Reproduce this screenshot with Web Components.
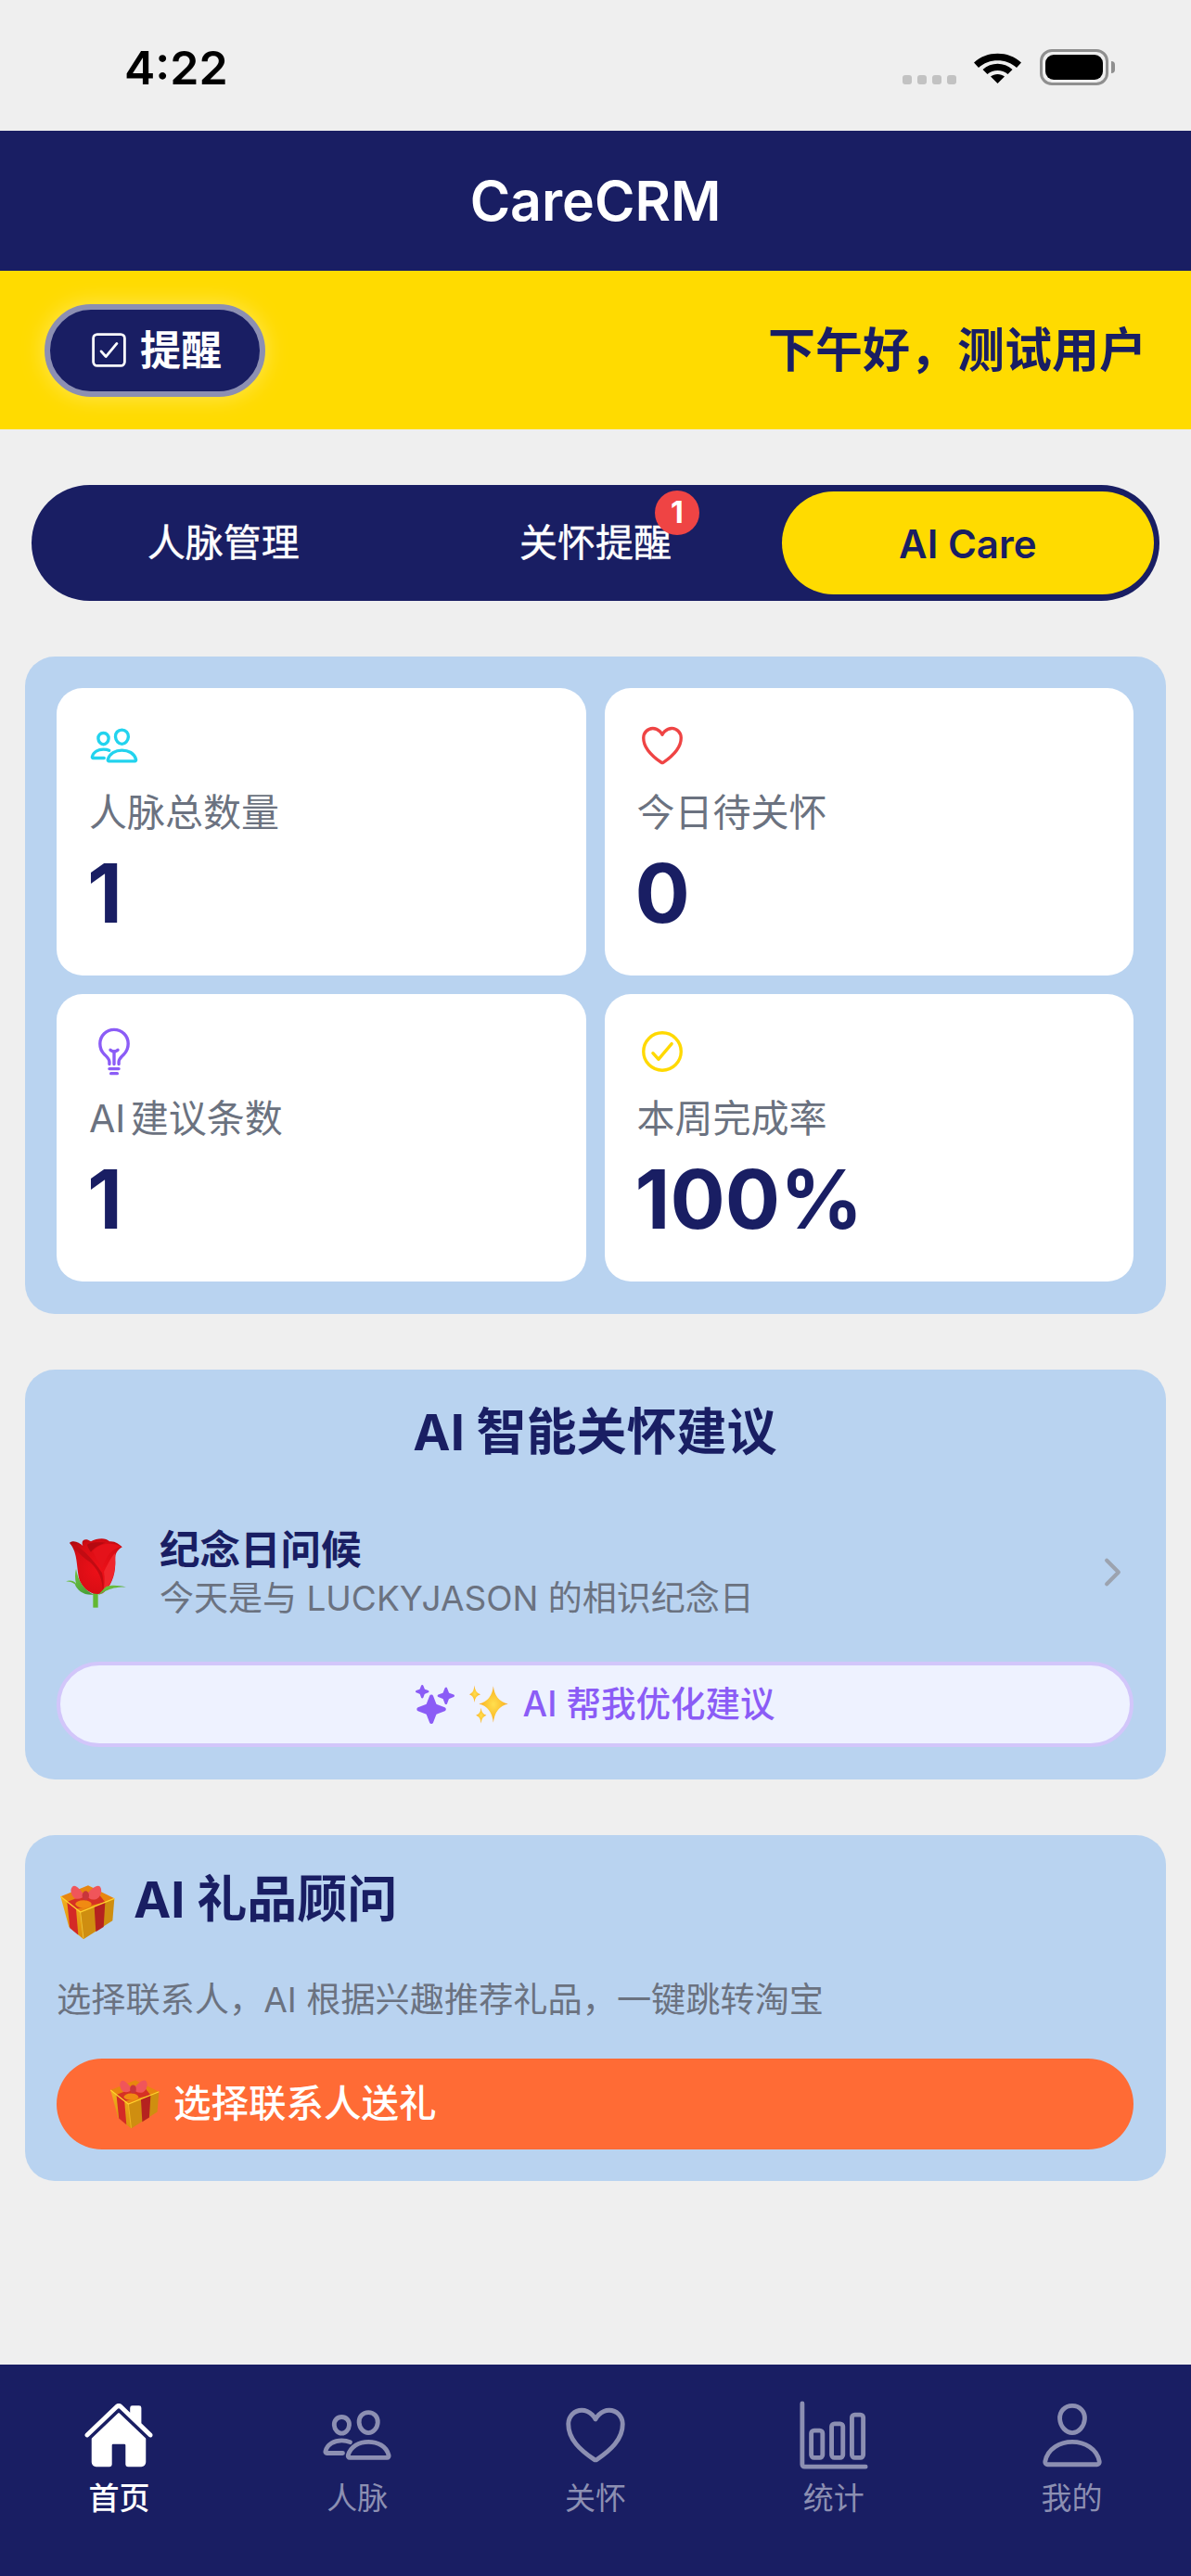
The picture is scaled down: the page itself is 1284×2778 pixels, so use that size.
<!DOCTYPE html>
<html lang="zh-CN">
<head>
<meta charset="utf-8">
<title>CareCRM</title>
<style>
  html, body { margin: 0; padding: 0; background: #efefef; }
  body { width: 1284px; height: 2778px; overflow: hidden; font-family: Inter, "Noto Sans CJK SC", sans-serif; }
</style>
</head>
<body>
<care-app>
  <status-bar slot="top" time="4:22"></status-bar>
  <app-header slot="top">CareCRM</app-header>
  <greeting-bar slot="top" label="提醒">下午好，测试用户</greeting-bar>

  <tab-switch active="2" badge-on="1" badge="1" tabs="人脉管理|关怀提醒|AI Care"></tab-switch>

  <stats-panel>
    <stat-card icon="people" color="#22d3ee" label="人脉总数量" value="1"></stat-card>
    <stat-card icon="heart" color="#ef4444" label="今日待关怀" value="0"></stat-card>
    <stat-card icon="bulb" color="#8b5cf6" label="AI 建议条数" value="1"></stat-card>
    <stat-card icon="check" color="#ffd900" label="本周完成率" value="100%"></stat-card>
  </stats-panel>

  <suggest-panel heading="AI 智能关怀建议" item-title="纪念日问候" item-text="今天是与 LUCKYJASON 的相识纪念日" action="AI 帮我优化建议"></suggest-panel>

  <gift-panel heading="AI 礼品顾问" text="选择联系人，AI 根据兴趣推荐礼品，一键跳转淘宝" action="选择联系人送礼"></gift-panel>

  <bottom-nav slot="bottom">
    <nav-item icon="home" label="首页" active></nav-item>
    <nav-item icon="people" label="人脉"></nav-item>
    <nav-item icon="heart" label="关怀"></nav-item>
    <nav-item icon="chart" label="统计"></nav-item>
    <nav-item icon="person" label="我的"></nav-item>
  </bottom-nav>
</care-app>

<script>
const NAVY = "#191e63";

// ionicons style outlines, all on a 512 box
const line = 'fill="none" stroke="currentColor" stroke-width="32" stroke-linecap="round" stroke-linejoin="round"';
const GLYPHS = {
  home: `<path fill="currentColor" d="M261.56 101.28a8 8 0 00-11.06 0L66.4 277.15a8 8 0 00-2.47 5.79L63.9 448a32 32 0 0032 32H192a16 16 0 0016-16V328a8 8 0 018-8h80a8 8 0 018 8v136a16 16 0 0016 16h96.06a32 32 0 0032-32V282.94a8 8 0 00-2.47-5.79z"/><path fill="currentColor" d="M490.91 244.15l-74.8-71.56V64a16 16 0 00-16-16h-48a16 16 0 00-16 16v32l-57.92-55.38C272.77 35.14 264.71 32 256 32c-8.68 0-16.72 3.14-22.14 8.63l-212.7 203.5c-6.22 6-7 15.87-1.34 22.37A16 16 0 0043 267.56L250.5 69.28a8 8 0 0111.06 0l207.52 198.28a16 16 0 0022.59-.44c6.14-6.36 5.63-16.86-.76-22.97z"/>`,
  people: `<path ${line} d="M402 168c-2.93 40.67-33.1 72-66 72s-63.12-31.32-66-72c-3-42.31 26.37-72 66-72s69 30.46 66 72z"/><path ${line} d="M336 304c-65.17 0-127.84 32.37-143.54 95.41-2.08 8.34 3.15 16.59 11.72 16.59h263.65c8.57 0 13.77-8.25 11.72-16.59C463.85 335.36 401.18 304 336 304z"/><path ${line} d="M200 185.94c-2.34 32.48-26.72 58.06-53 58.06s-50.7-25.57-53-58.06C91.61 152.15 115.34 128 147 128s55.39 24.77 53 57.94z"/><path ${line} d="M206 306c-18.05-8.27-37.93-11.45-59-11.45-52 0-102.1 25.85-114.65 76.2-1.65 6.66 2.53 13.25 9.37 13.25H154"/>`,
  heart: `<path ${line} d="M352.92 80C288 80 256 144 256 144s-32-64-96.92-64c-52.76 0-94.54 44.14-95.08 96.81-1.1 109.33 86.73 187.08 183 252.42a16 16 0 0018 0c96.26-65.34 184.09-143.09 183-252.42-.54-52.67-42.32-96.81-95.08-96.81z"/>`,
  bulb: `<path ${line} d="M304 384v-24c0-29 31.54-56.43 52-76 28.84-27.57 44-64.61 44-108 0-80-63.73-144-144-144a143.6 143.6 0 00-144 144c0 41.84 15.81 81.39 44 108 20.35 19.21 52 46.7 52 76v24M224 480h64M208 432h96M256 384V256"/><path ${line} d="M294 240s-21.51 16-38 16-38-16-38-16"/>`,
  check: `<path ${line} d="M448 256c0-106-86-192-192-192S64 150 64 256s86 192 192 192 192-86 192-192z"/><path ${line} d="M352 176L217.6 336 160 272"/>`,
  checkbox: `<path ${line} d="M352 176L217.6 336 160 272"/><rect ${line} x="64" y="64" width="384" height="384" rx="48" ry="48"/>`,
  chart: `<path ${line} d="M32 32v432a16 16 0 0016 16h432"/><rect ${line} x="96" y="224" width="80" height="192" rx="20" ry="20"/><rect ${line} x="240" y="176" width="80" height="240" rx="20" ry="20"/><rect ${line} x="383.64" y="112" width="80" height="304" rx="20" ry="20"/>`,
  person: `<path ${line} d="M344 144c-3.92 52.87-44 96-88 96s-84.15-43.12-88-96c-4-55 35-96 88-96s92 42 88 96z"/><path ${line} d="M256 304c-87 0-175.3 48-191.64 138.6C62.39 453.52 68.57 464 80 464h352c11.44 0 17.62-10.48 15.65-21.4C431.3 352 343 304 256 304z"/>`,
  chevron: `<path fill="none" stroke="currentColor" stroke-width="48" stroke-linecap="round" stroke-linejoin="round" d="M184 112l144 144-144 144"/>`,
  sparkles: `<path fill="currentColor" d="M208 512a24.84 24.84 0 01-23.34-16l-39.84-103.6a16.06 16.06 0 00-9.19-9.19L32 343.34a25 25 0 010-46.68l103.6-39.84a16.06 16.06 0 009.19-9.19L184.66 144a25 25 0 0146.68 0l39.84 103.6a16.06 16.06 0 009.19 9.19l103 39.63a25.49 25.49 0 0116.63 24.1 24.82 24.82 0 01-16 22.82l-103.6 39.84a16.06 16.06 0 00-9.19 9.19L231.34 496A24.84 24.84 0 01208 512zM88 176a14.67 14.67 0 01-13.69-9.4l-16.86-43.84a7.28 7.28 0 00-4.21-4.21L9.4 101.69a14.67 14.67 0 010-27.38l43.84-16.86a7.31 7.31 0 004.21-4.21L74.16 9.79A15 15 0 0186.23.11a14.67 14.67 0 0115.46 9.29l16.86 43.84a7.31 7.31 0 004.21 4.21l43.84 16.86a14.67 14.67 0 010 27.38l-43.84 16.86a7.28 7.28 0 00-4.21 4.21l-16.86 43.84A14.67 14.67 0 0188 176zM400 256a16 16 0 01-14.93-10.26l-22.84-59.37a8 8 0 00-4.6-4.6l-59.37-22.84a16 16 0 010-29.86l59.37-22.84a8 8 0 004.6-4.6l22.67-58.95a16.45 16.45 0 0113.17-10.57 16 16 0 0116.86 10.15l22.84 59.37a8 8 0 004.6 4.6l59.37 22.84a16 16 0 010 29.86l-59.37 22.84a8 8 0 00-4.6 4.6l-22.84 59.37A16 16 0 01400 256z"/>`
};

class CareGlyph extends HTMLElement {
  connectedCallback() {
    const size = this.getAttribute("size") || 54;
    const root = this.shadowRoot || this.attachShadow({ mode: "open" });
    root.innerHTML = `
      <style>:host { display: block; width: ${size}px; height: ${size}px; flex: none; } svg { display: block; }</style>
      <svg width="${size}" height="${size}" viewBox="0 0 512 512">${GLYPHS[this.getAttribute("name")]}</svg>`;
  }
}
customElements.define("care-glyph", CareGlyph);

// emoji pictures, no colour emoji font in the sandbox
class GiftEmoji extends HTMLElement {
  connectedCallback() {
    const size = this.getAttribute("size") || 58;
    const id = "g" + size;
    const root = this.shadowRoot || this.attachShadow({ mode: "open" });
    root.innerHTML = `
      <style>:host { display: block; width: ${size}px; height: ${size}px; flex: none; } svg { display: block; }</style>
      <svg width="${size}" height="${size}" viewBox="72 98 180 180">
        <defs><linearGradient id="${id}" x1="0" y1="0" x2="0" y2="1"><stop offset="0" stop-color="#f2b01e"/><stop offset="1" stop-color="#d98f0c"/></linearGradient></defs>
        <path fill="url(#${id})" d="M76 138L140 188 150 276 103 236Z"/>
        <path fill="#cf8e10" d="M140 188L250 144 244 216 150 276Z"/>
        <path fill="#e8860f" d="M76 138L165 102 250 144 140 188Z"/>
        <path fill="#d42a26" d="M97 155L126 178 133 262 106 240Z"/>
        <path fill="#b5221f" d="M185 170L220 156 215 236 190 252Z"/>
        <path fill="#d42a26" d="M97 155L190 118 220 156 126 178Z" opacity=".92"/>
        <ellipse cx="150" cy="162" rx="26" ry="12" fill="#f08a12"/>
        <path fill="none" stroke="#ffd22e" stroke-width="4" d="M76 138L140 188 250 144"/>
        <path fill="none" stroke="#ffd22e" stroke-width="2" d="M140 188L150 274"/>
        <path fill="#f0555a" d="M155 135C140 118 125 96 114 106 104 116 112 138 122 144 135 148 146 144 155 135Z"/>
        <path fill="#f0555a" d="M158 135C170 116 194 96 204 106 212 118 206 138 192 146 178 150 166 146 158 135Z"/>
        <ellipse cx="157" cy="135" rx="11" ry="15" fill="#c9353a"/>
      </svg>`;
  }
}
customElements.define("gift-emoji", GiftEmoji);

class RoseEmoji extends HTMLElement {
  connectedCallback() {
    const root = this.shadowRoot || this.attachShadow({ mode: "open" });
    root.innerHTML = `
      <style>:host { display: block; width: 68px; height: 76px; flex: none; } svg { display: block; }</style>
      <svg width="68" height="76" viewBox="88 81 204 228">
        <defs>
          <radialGradient id="bud" cx=".55" cy=".55" r=".7"><stop offset="0" stop-color="#ee1018"/><stop offset=".7" stop-color="#d60d14"/><stop offset="1" stop-color="#a80a10"/></radialGradient>
          <linearGradient id="leaf" x1="0" y1="0" x2="1" y2="1"><stop offset="0" stop-color="#7ccb3f"/><stop offset="1" stop-color="#3f9a37"/></linearGradient>
        </defs>
        <rect x="179" y="258" width="16" height="50" fill="#63b832"/>
        <path fill="url(#bud)" d="M103 98C118 88 134 98 146 108 138 92 152 80 172 94 190 84 220 80 232 94 250 92 264 104 273 112 258 122 250 132 250 154 254 194 240 240 210 262 182 270 152 256 136 222 124 182 132 132 103 98Z"/>
        <path fill="#c20b12" d="M103 98C134 106 176 146 208 196 214 226 214 244 210 262 212 216 196 186 168 160 140 140 122 120 103 98Z"/>
        <path fill="#e5121a" d="M178 126C196 102 236 92 273 112 240 116 222 140 208 184 198 166 188 146 178 126Z"/>
        <path fill="#b50a11" d="M160 104C172 96 196 96 220 98 200 104 184 112 172 128 166 120 162 112 160 104Z"/>
        <path fill="#f0262c" d="M214 192C226 168 236 146 250 132 256 186 240 236 212 258 216 236 218 214 214 192Z"/>
        <path fill="url(#leaf)" d="M124 182C130 222 150 252 182 266 150 270 128 254 120 232 112 226 100 222 90 224 102 218 116 220 124 230 120 214 120 198 124 182Z"/>
        <path fill="url(#leaf)" d="M196 268C214 262 226 240 288 242 262 236 240 234 222 240 212 248 204 258 196 268Z"/>
      </svg>`;
  }
}
customElements.define("rose-emoji", RoseEmoji);

class CareApp extends HTMLElement {
  constructor() {
    super();
    this.attachShadow({ mode: "open" });
    this.shadowRoot.innerHTML = `
      <style>
        :host { display: flex; flex-direction: column; height: 2778px; background: #efefef; }
        main { flex: 1; display: flex; flex-direction: column; gap: 60px; padding: 60px 27px 0; min-height: 0; }
      </style>
      <slot name="top"></slot>
      <main><slot></slot></main>
      <slot name="bottom"></slot>`;
  }
}
customElements.define("care-app", CareApp);

class StatusBar extends HTMLElement {
  constructor() {
    super();
    this.attachShadow({ mode: "open" });
    this.shadowRoot.innerHTML = `
      <style>
        :host { display: flex; align-items: flex-start; justify-content: space-between; height: 141px; box-sizing: border-box; padding: 43px 82px 0 134px; background: #efefef; }
        .time { font: 600 50px/60px Inter, sans-serif; color: #000; }
        .right { display: flex; align-items: flex-start; padding-top: 10px; }
        .dots { display: flex; gap: 6px; margin: 28px 19px 0 0; }
        .dots i { width: 10px; height: 10px; border-radius: 3px; background: #c2c2c2; }
        .wifi { margin-right: 20px; display: block; }
        .battery { display: flex; align-items: center; }
        .shell { width: 74px; height: 39px; box-sizing: border-box; border: 3px solid #8f8f8f; border-radius: 13px; padding: 3px; }
        .shell b { display: block; height: 100%; background: #000; border-radius: 9px; }
        .nub { width: 4px; height: 13px; margin-left: 3px; background: #8f8f8f; border-radius: 0 4px 4px 0; }
      </style>
      <span class="time"></span>
      <div class="right">
        <div class="dots"><i></i><i></i><i></i><i></i></div>
        <svg class="wifi" width="51" height="37" viewBox="0 0 51 37">
          <path d="M0 14.5C13.5 1.5 37.5 1.5 51 14.5L46 20C35 9.5 16 9.5 5 20Z" fill="#000"/>
          <path d="M9.5 24C18.5 15.5 32.5 15.5 41.5 24L36.5 29C30.5 23.5 20.5 23.5 14.5 29Z" fill="#000" transform="translate(0 -2)"/>
          <path d="M18 29.5C22 26 29 26 33 29.5L25.5 37Z" fill="#000"/>
        </svg>
        <div class="battery"><div class="shell"><b></b></div><div class="nub"></div></div>
      </div>`;
  }
  connectedCallback() {
    this.shadowRoot.querySelector(".time").textContent = this.getAttribute("time");
  }
}
customElements.define("status-bar", StatusBar);

class AppHeader extends HTMLElement {
  constructor() {
    super();
    this.attachShadow({ mode: "open" });
    this.shadowRoot.innerHTML = `
      <style>
        :host { display: flex; align-items: center; justify-content: center; height: 151px; background: ${NAVY}; color: #fff; font: 600 59px/1 Inter, sans-serif; }
      </style>
      <slot></slot>`;
  }
}
customElements.define("app-header", AppHeader);

class GreetingBar extends HTMLElement {
  constructor() {
    super();
    this.attachShadow({ mode: "open" });
    this.shadowRoot.innerHTML = `
      <style>
        :host { display: flex; align-items: center; justify-content: space-between; height: 171px; padding: 0 48px; background: #ffdb00; }
        button {
          display: flex; align-items: center; gap: 11px; height: 100px; box-sizing: border-box; padding: 0 41px;
          border: 6px solid #8c8fb2; border-radius: 50px; background: ${NAVY}; color: #fff;
          font: 700 44px/1 Inter, "Noto Sans CJK SC", sans-serif;
          box-shadow: 0 0 24px rgba(255, 255, 255, .35);
        }
        .hello { font: 700 51px/1 Inter, "Noto Sans CJK SC", sans-serif; color: ${NAVY}; }
      </style>
      <button><care-glyph name="checkbox" size="45"></care-glyph><span class="label"></span></button>
      <span class="hello"><slot></slot></span>`;
  }
  connectedCallback() {
    this.shadowRoot.querySelector(".label").textContent = this.getAttribute("label");
  }
}
customElements.define("greeting-bar", GreetingBar);

class TabSwitch extends HTMLElement {
  constructor() {
    super();
    this.attachShadow({ mode: "open" });
  }
  connectedCallback() {
    const tabs = this.getAttribute("tabs").split("|");
    const active = Number(this.getAttribute("active"));
    const badgeOn = Number(this.getAttribute("badge-on"));
    const items = tabs.map((t, i) => `
      <div class="tab ${i === active ? "on" : ""}"><span class="txt">${t}${i === badgeOn ? `<b class="badge">${this.getAttribute("badge")}</b>` : ""}</span></div>`).join("");
    this.shadowRoot.innerHTML = `
      <style>
        :host { display: flex; height: 125px; box-sizing: border-box; margin: 0 7px; padding: 7px 6px; background: ${NAVY}; border-radius: 63px; }
        .tab { flex: 1; display: flex; align-items: center; justify-content: center; border-radius: 56px; color: #fff; font: 400 41px/1 Inter, "Noto Sans CJK SC", sans-serif; -webkit-text-stroke: .4px #fff; }
        .tab.on { background: #ffdb00; color: ${NAVY}; font-weight: 600; font-size: 42px; -webkit-text-stroke: 0; padding-top: 2px; }
        .txt { position: relative; }
        .badge { position: absolute; left: 146px; top: -36px; width: 48px; height: 48px; border-radius: 50%; background: #ef4444; color: #fff; display: flex; align-items: center; justify-content: center; font: 700 32px/1 Inter, sans-serif; -webkit-text-stroke: 0; }
      </style>
      ${items}`;
  }
}
customElements.define("tab-switch", TabSwitch);

class StatsPanel extends HTMLElement {
  constructor() {
    super();
    this.attachShadow({ mode: "open" });
    this.shadowRoot.innerHTML = `
      <style>
        :host { display: grid; grid-template-columns: 1fr 1fr; gap: 20px; padding: 34px 35px 35px 34px; background: #b9d3f0; border-radius: 32px; }
      </style>
      <slot></slot>`;
  }
}
customElements.define("stats-panel", StatsPanel);

class StatCard extends HTMLElement {
  constructor() {
    super();
    this.attachShadow({ mode: "open" });
  }
  connectedCallback() {
    this.shadowRoot.innerHTML = `
      <style>
        :host { display: block; height: 310px; box-sizing: border-box; padding: 35px 35px 0; background: #fff; border-radius: 28px; }
        .ic { color: ${this.getAttribute("color")}; }
        .label { margin-top: 20px; font: 400 41px/50px Inter, "Noto Sans CJK SC", sans-serif; color: #6b7280; word-spacing: -6px; }
        .value { margin-top: 12px; margin-left: -2px; font: 700 88px/100px Inter, sans-serif; color: ${NAVY}; }
      </style>
      <care-glyph class="ic" name="${this.getAttribute("icon")}" size="54"></care-glyph>
      <div class="label">${this.getAttribute("label")}</div>
      <div class="value">${this.getAttribute("value")}</div>`;
  }
}
customElements.define("stat-card", StatCard);

class SuggestPanel extends HTMLElement {
  constructor() {
    super();
    this.attachShadow({ mode: "open" });
  }
  connectedCallback() {
    this.shadowRoot.innerHTML = `
      <style>
        :host { display: block; height: 442px; box-sizing: border-box; padding: 34px 35px 0 34px; background: #b9d3f0; border-radius: 32px; font-family: Inter, "Noto Sans CJK SC", sans-serif; }
        h2 { margin: 0; text-align: center; font: 700 54px/68px Inter, "Noto Sans CJK SC", sans-serif; color: ${NAVY}; }
        .row { display: flex; align-items: center; margin-top: 65px; padding: 0 0 0 9px; }
        .copy { flex: 1; margin-left: 34px; }
        .t { font: 700 43.5px/54px Inter, "Noto Sans CJK SC", sans-serif; color: ${NAVY}; }
        .s { font: 400 37px/46px Inter, "Noto Sans CJK SC", sans-serif; color: #6b7280; margin-top: 3px; }
        .ch { color: #9ca3af; }
        button {
          display: flex; align-items: center; justify-content: center; width: 100%; height: 92px; box-sizing: border-box; margin-top: 45px;
          border: 4px solid #d2c6fa; border-radius: 46px; background: #eef2ff; color: #8b5cf6;
          font: 500 37.5px/1 Inter, "Noto Sans CJK SC", sans-serif;
        }
        .star { margin-right: 16px; }
        .gold { display: block; margin-right: 16px; }
      </style>
      <h2>${this.getAttribute("heading")}</h2>
      <div class="row">
        <rose-emoji></rose-emoji>
        <div class="copy"><div class="t">${this.getAttribute("item-title")}</div><div class="s">${this.getAttribute("item-text")}</div></div>
        <care-glyph class="ch" name="chevron" size="45"></care-glyph>
      </div>
      <button>
        <care-glyph class="star" name="sparkles" size="42"></care-glyph>
        <svg class="gold" width="42" height="42" viewBox="253 53 130 127">
          <defs><radialGradient id="sp" cx=".5" cy=".5" r=".55"><stop offset="0" stop-color="#ffdf4f"/><stop offset=".6" stop-color="#fcc02e"/><stop offset="1" stop-color="#f59a23"/></radialGradient></defs>
          <path fill="url(#sp)" d="M333 55Q338 104 382 115 338 126 333 178 328 126 285 115 328 104 333 55Z"/>
          <path fill="url(#sp)" d="M270 53Q272 78 290 83 272 88 270 110 268 88 253 83 268 78 270 53Z"/>
          <path fill="url(#sp)" d="M292 128Q294 148 310 153 294 158 292 180 290 158 275 153 290 148 292 128Z"/>
        </svg>
        <span>${this.getAttribute("action")}</span>
      </button>`;
  }
}
customElements.define("suggest-panel", SuggestPanel);

class GiftPanel extends HTMLElement {
  constructor() {
    super();
    this.attachShadow({ mode: "open" });
  }
  connectedCallback() {
    this.shadowRoot.innerHTML = `
      <style>
        :host { display: block; height: 373px; box-sizing: border-box; padding: 34px 35px 0 34px; background: #b9d3f0; border-radius: 32px; }
        .head { display: flex; align-items: flex-start; gap: 20px; height: 80px; }
        .head gift-emoji { margin: 19px 0 0 3px; }
        h2 { margin: 2px 0 0; font: 700 54px/68px Inter, "Noto Sans CJK SC", sans-serif; color: ${NAVY}; }
        p { margin: 40px 0 0; font: 400 37.2px/48px Inter, "Noto Sans CJK SC", sans-serif; color: #6b7280; }
        button {
          display: flex; align-items: center; gap: 15px; width: 100%; height: 98px; box-sizing: border-box; margin-top: 39px; padding: 0 54px 0 57px;
          border: 0; border-radius: 49px; background: #ff6b35; color: #fff;
          font: 500 40.5px/1 Inter, "Noto Sans CJK SC", sans-serif;
        }
      </style>
      <div class="head"><gift-emoji size="60"></gift-emoji><h2>${this.getAttribute("heading")}</h2></div>
      <p>${this.getAttribute("text")}</p>
      <button><gift-emoji size="54"></gift-emoji><span>${this.getAttribute("action")}</span></button>`;
  }
}
customElements.define("gift-panel", GiftPanel);

class BottomNav extends HTMLElement {
  constructor() {
    super();
    this.attachShadow({ mode: "open" });
    this.shadowRoot.innerHTML = `
      <style>
        :host { display: grid; grid-template-columns: repeat(5, 1fr); height: 228px; box-sizing: border-box; padding-top: 37px; background: ${NAVY}; }
      </style>
      <slot></slot>`;
  }
}
customElements.define("bottom-nav", BottomNav);

class NavItem extends HTMLElement {
  constructor() {
    super();
    this.attachShadow({ mode: "open" });
  }
  connectedCallback() {
    this.shadowRoot.innerHTML = `
      <style>
        :host { display: flex; flex-direction: column; align-items: center; color: #8c8fb2; }
        :host([active]) { color: #fff; }
        .l { margin-top: 7px; font: 400 33px/44px Inter, "Noto Sans CJK SC", sans-serif; }
        :host([active]) .l { font-weight: 500; }
      </style>
      <care-glyph name="${this.getAttribute("icon")}" size="78"></care-glyph>
      <div class="l">${this.getAttribute("label")}</div>`;
  }
}
customElements.define("nav-item", NavItem);
</script>
</body>
</html>
